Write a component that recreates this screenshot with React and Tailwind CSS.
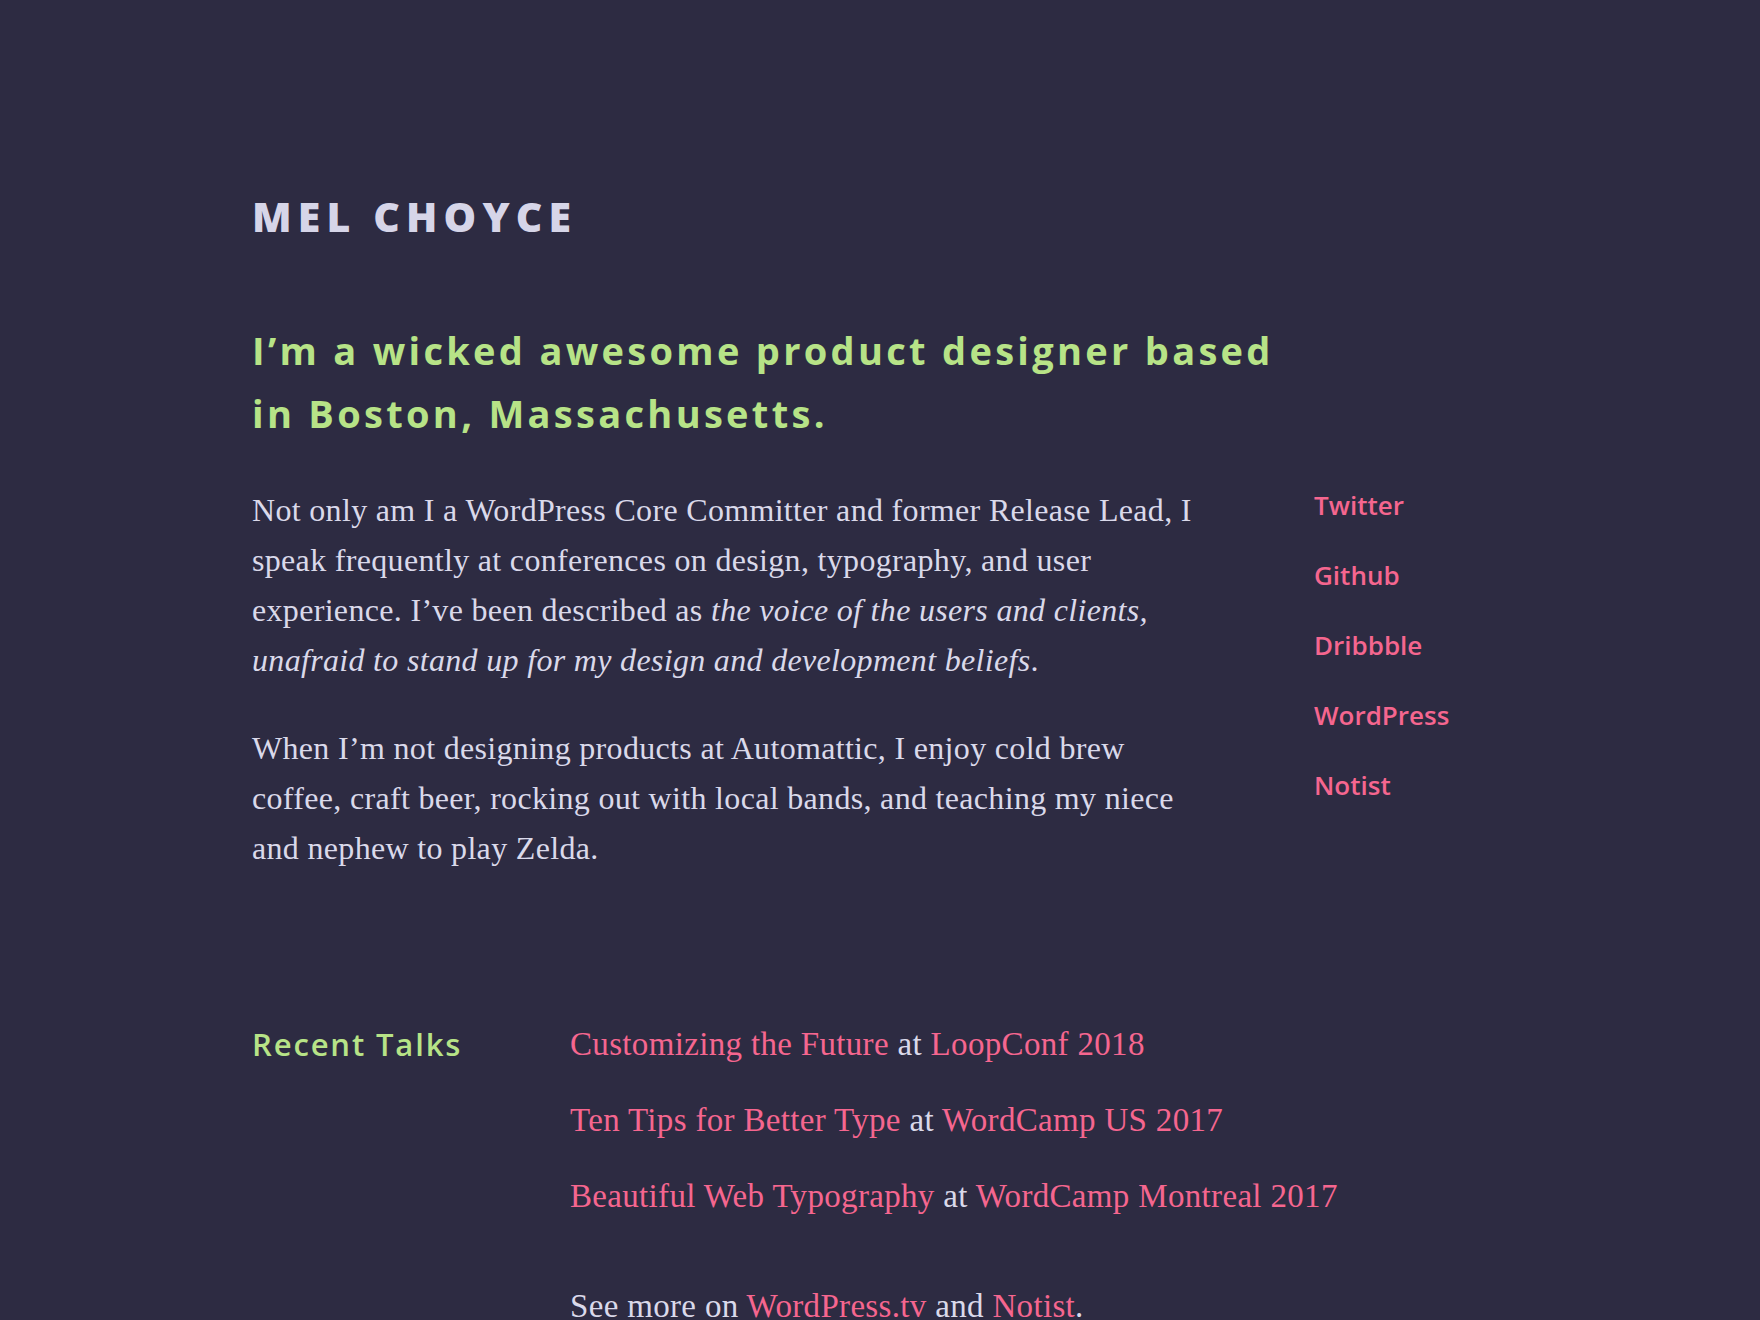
export default function App() {
  const heading = { fontFamily: '"Open Sans", "DejaVu Sans", sans-serif' };
  const serif = { fontFamily: '"Liberation Serif", "DejaVu Serif", serif' };

  const links = ["Twitter", "Github", "Dribbble", "WordPress", "Notist"];

  const talks = [
    { title: "Customizing the Future", event: "LoopConf 2018" },
    { title: "Ten Tips for Better Type", event: "WordCamp US 2017" },
    { title: "Beautiful Web Typography", event: "WordCamp Montreal 2017" },
  ];

  return (
    <div className="min-h-screen bg-[#2d2b42] overflow-hidden">
      <div className="w-[1256px] mx-auto pt-[196px]">
        {/* Site title */}
        <h1
          className="text-[41px] leading-[40px] font-extrabold tracking-[0.15em] text-[#d6d5e8]"
          style={heading}
        >
          MEL CHOYCE
        </h1>

        {/* Intro */}
        <h2
          className="mt-[83px] max-w-[1045px] text-[38px] leading-[63px] font-bold tracking-[0.087em] text-[#b7e387]"
          style={heading}
        >
          I’m a wicked awesome product designer based in Boston, Massachusetts.
        </h2>

        <div className="mt-[40px] grid grid-cols-[1062px_1fr]">
          <div
            className="max-w-[958px] text-[32px] leading-[50px] tracking-[0.01em] text-[#dad9ea]"
            style={serif}
          >
            <p>
              Not only am I a WordPress Core Committer and former Release Lead, I speak
              frequently at conferences on design, typography, and user experience. I’ve been
              described as <em>the voice of the users and clients, unafraid to stand up for my
              design and development beliefs</em>.
            </p>
            <p className="mt-[38px]">
              When I’m not designing products at Automattic, I enjoy cold brew coffee, craft
              beer, rocking out with local bands, and teaching my niece and nephew to play Zelda.
            </p>
          </div>

          <ul className="flex flex-col gap-[30px]" style={heading}>
            {links.map((l) => (
              <li key={l}>
                <a href="#" className="text-[26px] leading-[40px] font-semibold text-[#f5668f]">
                  {l}
                </a>
              </li>
            ))}
          </ul>
        </div>

        {/* Recent talks */}
        <div className="mt-[133px] grid grid-cols-[318px_1fr]">
          <h3
            className="text-[31px] leading-[76px] font-semibold tracking-[0.06em] text-[#b7e387]"
            style={heading}
          >
            Recent Talks
          </h3>
          <div className="text-[33px] leading-[76px] tracking-[0.01em] text-[#dad9ea]" style={serif}>
            <ul>
              {talks.map((t) => (
                <li key={t.title}>
                  <a href="#" className="text-[#f5668f]">{t.title}</a> at{" "}
                  <a href="#" className="text-[#f5668f]">{t.event}</a>
                </li>
              ))}
            </ul>
            <p className="mt-[34px]">
              See more on <a href="#" className="text-[#f5668f]">WordPress.tv</a> and{" "}
              <a href="#" className="text-[#f5668f]">Notist</a>.
            </p>
          </div>
        </div>
      </div>
    </div>
  );
}
